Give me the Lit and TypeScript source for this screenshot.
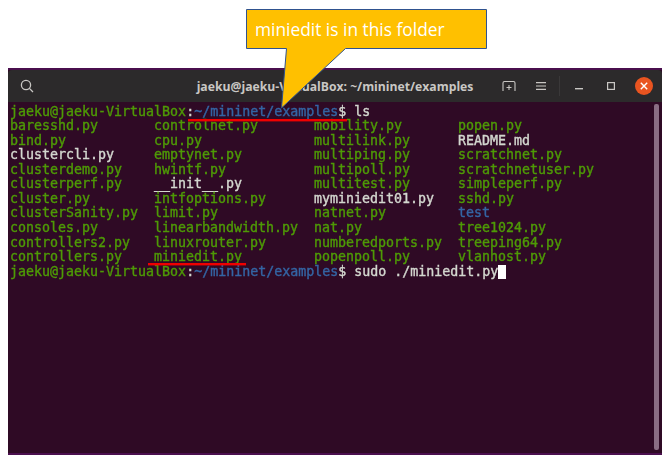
import { LitElement, html, css } from "lit";
import { customElement } from "lit/decorators.js";

type Kind = "g" | "w" | "b";
const files: [string, Kind][][] = [
  [["baresshd.py","g"],["controlnet.py","g"],["mobility.py","g"],["popen.py","g"]],
  [["bind.py","g"],["cpu.py","g"],["multilink.py","g"],["README.md","w"]],
  [["clustercli.py","w"],["emptynet.py","g"],["multiping.py","g"],["scratchnet.py","g"]],
  [["clusterdemo.py","g"],["hwintf.py","g"],["multipoll.py","g"],["scratchnetuser.py","g"]],
  [["clusterperf.py","g"],["__init__.py","w"],["multitest.py","g"],["simpleperf.py","g"]],
  [["cluster.py","g"],["intfoptions.py","g"],["myminiedit01.py","w"],["sshd.py","g"]],
  [["clusterSanity.py","g"],["limit.py","g"],["natnet.py","g"],["test","b"]],
  [["consoles.py","g"],["linearbandwidth.py","g"],["nat.py","g"],["tree1024.py","g"]],
  [["controllers2.py","g"],["linuxrouter.py","g"],["numberedports.py","g"],["treeping64.py","g"]],
  [["controllers.py","g"],["miniedit.py","g"],["popenpoll.py","g"],["vlanhost.py","g"]],
];

@customElement("app-root")
export class AppRoot extends LitElement {
  static styles = css`
    :host { display: block; width: 667px; height: 461px; background: #fff; position: relative; overflow: hidden; }
    .page { padding: 68px 5px 6px 8px; box-sizing: border-box; height: 461px; }
    .win { height: 387px; background: #2f0a25; border-top: 2px solid #4a0f4e; border-bottom: 2px solid #4a0f4e; box-sizing: border-box; display: flex; flex-direction: column; }
    .bar { height: 32px; flex: none; background: #2c2a2b; display: grid; grid-template-columns: 1fr auto 1fr; align-items: center; border-radius: 4px 4px 0 0; }
    .search { margin-left: 12px; display: block; }
    .title { font: 700 12.2px "Open Sans", sans-serif; color: #c9c7c4; white-space: pre; }
    .btns { display: flex; align-items: center; justify-content: flex-end; height: 32px; }
    .btns svg { display: block; flex: none; }
    .sep { width: 1px; height: 20px; background: #3a3839; margin: 0 15px 0 13px; }
    .body { flex: 1; display: flex; padding: 2px 3px 3px 2px; min-height: 0; }
    .term { flex: 1; padding-top: 0.6px; font: 400 13.3px/14.55px "DejaVu Sans Mono", monospace; color: #d3d7cf; filter: blur(0.35px); -webkit-text-stroke: 0.38px currentColor; }
    .line { height: 14.55px; white-space: pre; }
    .row { display: grid; grid-template-columns: 144px 160px 144px 1fr; height: 14.55px; white-space: pre; }
    .g { color: #4e9a06; }
    .b { color: #3465a4; }
    .w { color: #d3d7cf; }
    .cursor { display: inline-block; width: 8px; height: 14px; background: #fff; vertical-align: -3px; }
    .scroll { width: 5px; background: #8a6d84; border-radius: 2px; flex: none; }
    .over { position: absolute; left: 0; top: 0; pointer-events: none; }
    .label { position: absolute; left: 255px; top: 19px; font: 400 17.35px/20px "Open Sans", sans-serif; color: #fff; white-space: pre; }
  `;

  private prompt() {
    return html`<span class="g">jaeku@jaeku-VirtualBox</span>:<span class="b">~/mininet/examples</span>$ `;
  }

  render() {
    return html`
      <div class="page">
        <div class="win">
          <div class="bar">
            <svg class="search" width="14" height="14" viewBox="0 0 14 14" fill="none" stroke="#c9c7c4" stroke-width="1.3">
              <circle cx="6" cy="6" r="4.6"/><path d="M9.4 9.4 13 13"/>
            </svg>
            <div class="title">jaeku@jaeku-VirtualBox: ~/mininet/examples</div>
            <div class="btns">
              <svg width="14" height="12" viewBox="0 0 14 12" fill="none" stroke="#c9c7c4" stroke-width="1.1" style="margin-right:20px">
                <path d="M1 11V3Q1 1.5 2.5 1.5H11.5Q13 1.5 13 3V11"/><path d="M7 5V10M4.5 7.5H9.5"/>
              </svg>
              <svg width="10" height="8" viewBox="0 0 10 8" fill="none" stroke="#c9c7c4" stroke-width="1.2">
                <path d="M0 .6H10M0 4H10M0 7.4H10"/>
              </svg>
              <div class="sep"></div>
              <svg width="8" height="2" viewBox="0 0 8 2" style="margin-top:5px;margin-right:24px"><rect width="8" height="1.4" fill="#c9c7c4"/></svg>
              <svg width="8" height="8" viewBox="0 0 8 8" fill="none" stroke="#c9c7c4" stroke-width="1.2" style="margin-right:20px"><rect x=".6" y=".6" width="6.8" height="6.8"/></svg>
              <svg width="18" height="18" viewBox="0 0 18 18" style="margin-right:9px">
                <circle cx="9" cy="9" r="9" fill="#e95420"/><path d="M5.8 5.8 12.2 12.2M12.2 5.8 5.8 12.2" stroke="#fff" stroke-width="1.4"/>
              </svg>
            </div>
          </div>
          <div class="body">
            <div class="term"><div class="line">${this.prompt()}ls</div>${files.map((r) => html`<div class="row">${r.map(([t, k]) => html`<span class=${k}>${t}</span>`)}</div>`)}<div class="line">${this.prompt()}sudo ./miniedit.py<span class="cursor"></span></div></div>
            <div class="scroll"></div>
          </div>
        </div>
      </div>
      <svg class="over" width="667" height="461" viewBox="0 0 667 461">
        <path d="M246.5 9.5H486.5V48.5H345.5L281.5 108L286.5 48.5H246.5Z" fill="#ffc000" stroke="#2f528f" stroke-width="1"/>
        <rect x="188" y="119" width="159" height="2.4" fill="#f00000"/>
        <rect x="148" y="263" width="98" height="2.4" fill="#f00000"/>
      </svg>
      <div class="label">miniedit is in this folder</div>
    `;
  }
}
